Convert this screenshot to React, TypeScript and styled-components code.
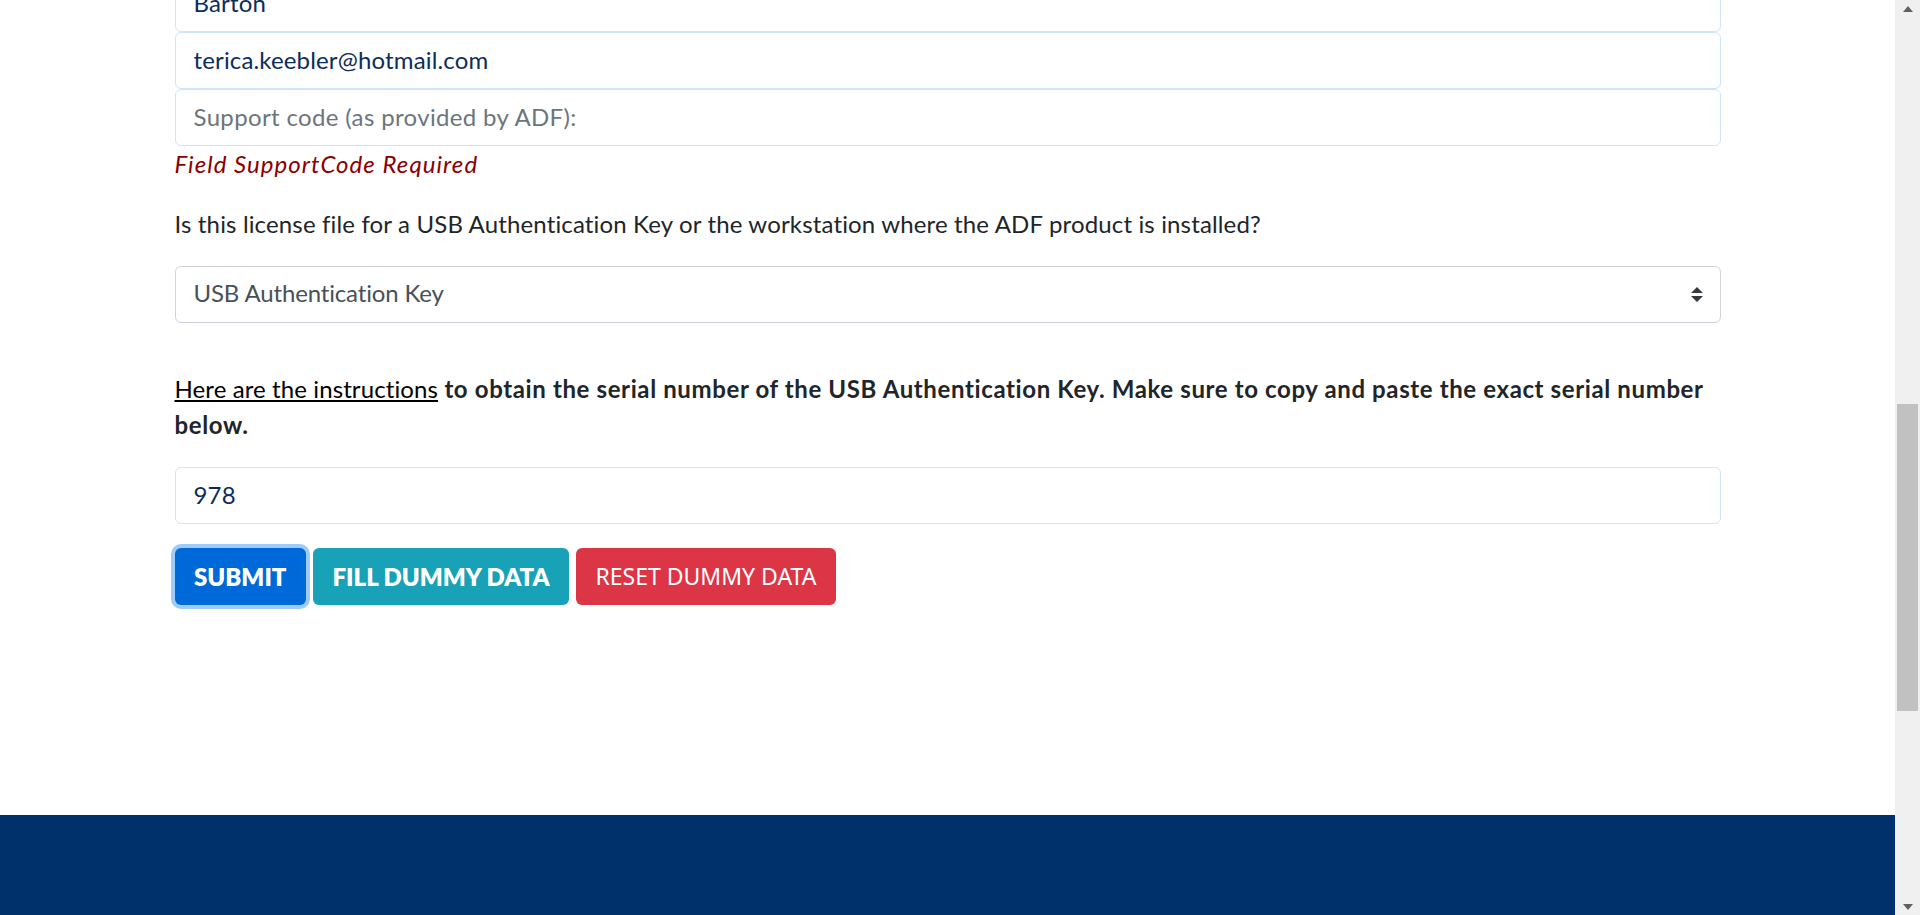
import React from "react";
import styled, { createGlobalStyle } from "styled-components";

const GlobalStyle = createGlobalStyle`
  html, body {
    margin: 0;
    padding: 0;
    height: 100%;
    overflow: hidden;
    background: #ffffff;
  }
  body {
    font-family: Lato, "Noto Sans", sans-serif;
    color: #212529;
  }
  * { box-sizing: border-box; }
`;

const Screen = styled.div`
  display: flex;
  width: 100%;
  height: 100vh;
`;

const Viewport = styled.main`
  flex: 1;
  display: flex;
  flex-direction: column;
  overflow: hidden;
  min-width: 0;
`;

const Content = styled.form`
  flex: 1;
  width: 1546px;
  margin: -25.5px auto 0;
  display: flex;
  flex-direction: column;
  font-size: 24px;
  line-height: 36px;
  letter-spacing: 0.15px;
`;

const TextInput = styled.input`
  display: block;
  width: 100%;
  height: 57px;
  padding: 8px 18px 10px;
  border: 1.5px solid #cfe5fb;
  border-radius: 6px;
  background: #fff;
  font: inherit;
  letter-spacing: 0.15px;
  color: #0c2d5b;
  outline: none;
  &::placeholder {
    color: #6c757d;
    letter-spacing: 0.35px;
  }
`;

const ErrorText = styled.div`
  font-style: italic;
  color: #8b0000;
  letter-spacing: 1.05px;
  margin-bottom: 24px;
`;

const Question = styled.p`
  margin: 0 0 24px;
`;

const SelectWrap = styled.div`
  position: relative;
  margin-bottom: 48px;
`;

const Select = styled.select`
  display: block;
  width: 100%;
  height: 57px;
  padding: 8px 40px 10px 18px;
  border: 1.5px solid #ced4da;
  border-radius: 6px;
  background: #fff;
  font: inherit;
  letter-spacing: -0.15px;
  color: #495057;
  appearance: none;
  -webkit-appearance: none;
  outline: none;
`;

const SelectArrow = styled.svg`
  position: absolute;
  right: 18px;
  top: 50%;
  width: 12px;
  height: 15px;
  margin-top: -7px;
  pointer-events: none;
`;

const Instructions = styled.p`
  margin: 0 0 24px;
  font-weight: 700;
  letter-spacing: 0.62px;
`;

const Link = styled.a`
  font-weight: 400;
  color: #000;
  letter-spacing: 0.1px;
  text-decoration: underline;
`;

const SerialInput = styled(TextInput)`
  margin-bottom: 24px;
`;

const ButtonRow = styled.div`
  display: flex;
  gap: 7px;
`;

const Button = styled.button<{ $bg: string; $bold?: boolean; $focus?: boolean }>`
  height: 57px;
  padding: 0 19.5px;
  border: none;
  border-radius: 6px;
  background: ${(p) => p.$bg};
  color: #fff;
  font-family: ${(p) => (p.$bold ? 'Lato, "Noto Sans", sans-serif' : '"Noto Sans", sans-serif')};
  font-size: ${(p) => (p.$bold ? "24px" : "23px")};
  font-weight: ${(p) => (p.$bold ? 800 : 400)};
  letter-spacing: 0;
  text-transform: uppercase;
  cursor: pointer;
  box-shadow: ${(p) => (p.$focus ? "0 0 0 4px #9ccbfc" : "none")};
`;

const Footer = styled.footer`
  height: 100px;
  flex-shrink: 0;
  background: #00316b;
`;

const Scrollbar = styled.aside`
  width: 25px;
  flex-shrink: 0;
  background: #f0f0f0;
  display: flex;
  flex-direction: column;
`;

const ScrollArrow = styled.div`
  height: 17px;
  display: flex;
  align-items: center;
  justify-content: center;
  flex-shrink: 0;
`;

const ScrollTrack = styled.div`
  flex: 1;
  padding: 0 2px;
`;

const ScrollThumb = styled.div`
  margin-top: 387px;
  height: 307px;
  background: #c1c1c1;
`;

export default function App() {
  return (
    <>
      <GlobalStyle />
      <Screen>
        <Viewport>
          <Content onSubmit={(e) => e.preventDefault()}>
            <TextInput type="text" defaultValue="Barton" readOnly />
            <TextInput type="email" defaultValue="terica.keebler@hotmail.com" readOnly />
            <TextInput type="text" placeholder="Support code (as provided by ADF):" />
            <ErrorText>Field SupportCode Required</ErrorText>
            <Question>
              Is this license file for a USB Authentication Key or the workstation where the ADF product is installed?
            </Question>
            <SelectWrap>
              <Select defaultValue="usb">
                <option value="usb">USB Authentication Key</option>
                <option value="ws">Workstation</option>
              </Select>
              <SelectArrow viewBox="0 0 4 5" aria-hidden="true">
                <path fill="#343a40" d="M2 0L0 2h4zm0 5L0 3h4z" />
              </SelectArrow>
            </SelectWrap>
            <Instructions>
              <Link href="#">Here are the instructions</Link> to obtain the serial number of the USB Authentication
              Key. Make sure to copy and paste the exact serial number below.
            </Instructions>
            <SerialInput type="text" defaultValue="978" readOnly />
            <ButtonRow>
              <Button type="submit" $bg="#0069d9" $bold $focus>
                Submit
              </Button>
              <Button type="button" $bg="#17a2b8" $bold>
                Fill Dummy Data
              </Button>
              <Button type="button" $bg="#dc3545">
                Reset Dummy Data
              </Button>
            </ButtonRow>
          </Content>
          <Footer />
        </Viewport>
        <Scrollbar>
          <ScrollArrow>
            <svg width="10" height="6" viewBox="0 0 10 6" aria-hidden="true">
              <path d="M0 6L5 0L10 6Z" fill="#606060" />
            </svg>
          </ScrollArrow>
          <ScrollTrack>
            <ScrollThumb />
          </ScrollTrack>
          <ScrollArrow>
            <svg width="10" height="6" viewBox="0 0 10 6" aria-hidden="true">
              <path d="M0 0L5 6L10 0Z" fill="#606060" />
            </svg>
          </ScrollArrow>
        </Scrollbar>
      </Screen>
    </>
  );
}
